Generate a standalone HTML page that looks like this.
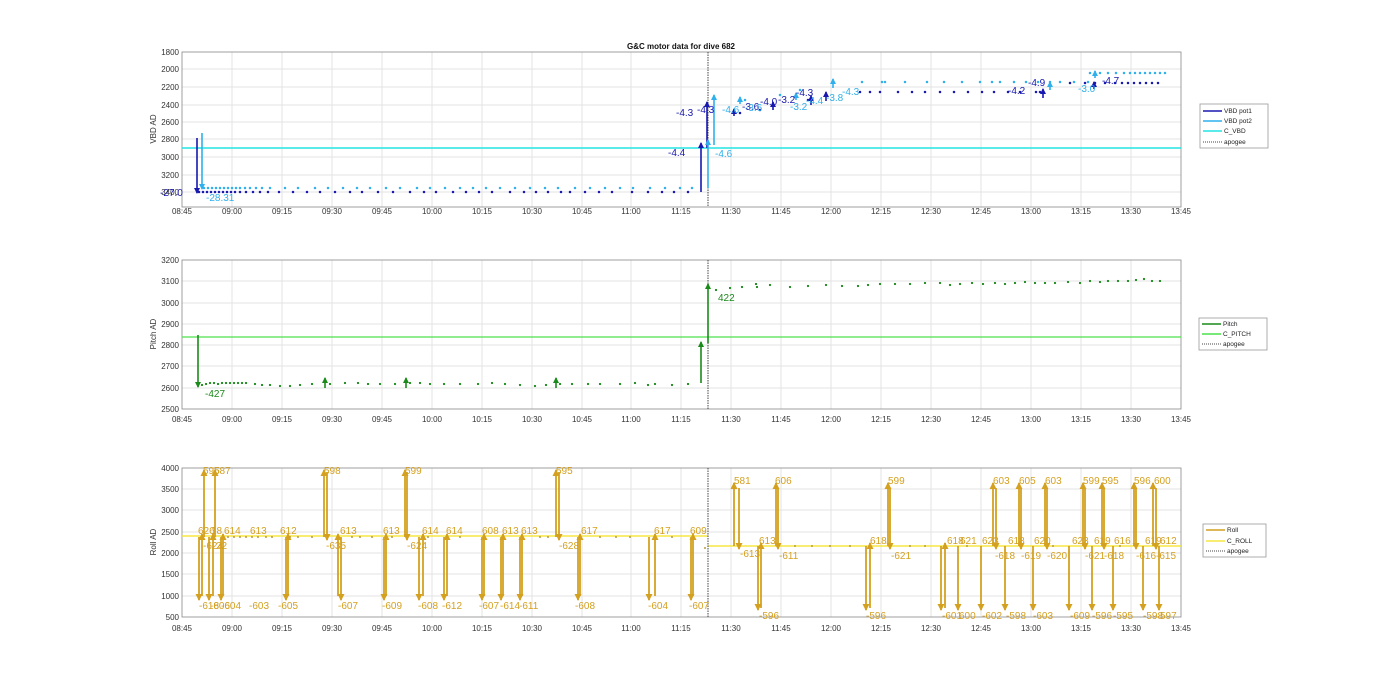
<!DOCTYPE html>
<html><head><meta charset="utf-8"><style>
html,body{margin:0;padding:0;background:#fff;}
svg{display:block;font-family:"Liberation Sans",Arial,sans-serif;}
.t{font-size:8px;fill:#333;}
.g{stroke:#e3e3e3;stroke-width:1;}
.ax{fill:none;stroke:#888;stroke-width:0.8;}
</style></head><body>
<svg width="1400" height="693" viewBox="0 0 1400 693" xmlns="http://www.w3.org/2000/svg">
<defs>
<marker id="ab" markerWidth="6" markerHeight="6" refX="5" refY="3" orient="auto" markerUnits="userSpaceOnUse" viewBox="0 0 6 6"><path d="M0,0 L6,3 L0,6Z" fill="#1818b0"/></marker>
<marker id="al" markerWidth="6" markerHeight="6" refX="5" refY="3" orient="auto" markerUnits="userSpaceOnUse" viewBox="0 0 6 6"><path d="M0,0 L6,3 L0,6Z" fill="#2fb0ec"/></marker>
<marker id="ag" markerWidth="6" markerHeight="6" refX="5" refY="3" orient="auto" markerUnits="userSpaceOnUse" viewBox="0 0 6 6"><path d="M0,0 L6,3 L0,6Z" fill="#1a8a1a"/></marker>
<marker id="ay" markerWidth="7" markerHeight="7" refX="6" refY="3.5" orient="auto" markerUnits="userSpaceOnUse" viewBox="0 0 7 7"><path d="M0,0 L7,3.5 L0,7Z" fill="#d4a020"/></marker>
</defs>

<text x="681" y="49" text-anchor="middle" style="font-size:8px;font-weight:bold;fill:#111">G&amp;C motor data for dive 682</text>

<!-- ============ TOP PLOT ============ -->
<g class="g">
<path d="M232,52V207M282,52V207M332,52V207M382,52V207M432,52V207M482,52V207M532,52V207M582,52V207M631,52V207M681,52V207M731,52V207M781,52V207M831,52V207M881,52V207M931,52V207M981,52V207M1031,52V207M1081,52V207M1131,52V207"/>
<path d="M182,69H1181M182,87H1181M182,105H1181M182,122H1181M182,139H1181M182,157H1181M182,175H1181M182,192H1181"/>
</g>
<rect class="ax" x="182" y="52" width="999" height="155"/>
<g class="t" text-anchor="end">
<text x="179" y="55">1800</text><text x="179" y="72">2000</text><text x="179" y="90">2200</text><text x="179" y="108">2400</text><text x="179" y="125">2600</text><text x="179" y="142">2800</text><text x="179" y="160">3000</text><text x="179" y="178">3200</text><text x="179" y="195">3400</text>
</g>
<text class="t" transform="translate(156,129) rotate(-90)" text-anchor="middle">VBD AD</text>
<g class="t" text-anchor="middle">
<text x="182" y="214">08:45</text><text x="232" y="214">09:00</text><text x="282" y="214">09:15</text><text x="332" y="214">09:30</text><text x="382" y="214">09:45</text><text x="432" y="214">10:00</text><text x="482" y="214">10:15</text><text x="532" y="214">10:30</text><text x="582" y="214">10:45</text><text x="631" y="214">11:00</text><text x="681" y="214">11:15</text><text x="731" y="214">11:30</text><text x="781" y="214">11:45</text><text x="831" y="214">12:00</text><text x="881" y="214">12:15</text><text x="931" y="214">12:30</text><text x="981" y="214">12:45</text><text x="1031" y="214">13:00</text><text x="1081" y="214">13:15</text><text x="1131" y="214">13:30</text><text x="1181" y="214">13:45</text>
</g>
<line x1="182" y1="148" x2="1181" y2="148" stroke="#22e4e4" stroke-width="1.5"/>
<line x1="708" y1="52" x2="708" y2="207" stroke="#444" stroke-dasharray="1.5,1" stroke-width="1"/>
<path stroke="#2fb0ec" stroke-width="2.5" stroke-linecap="round" d="M204,188h0M208,188h0M212,188h0M216,188h0M220,188h0M224,188h0M228,188h0M232,188h0M236,188h0M240,188h0M245,188h0M250,188h0M256,188h0M262,188h0M270,188h0M285,188h0M298,188h0M315,188h0M328,188h0M343,188h0M357,188h0M370,188h0M386,188h0M400,188h0M417,188h0M430,188h0M445,188h0M460,188h0M473,188h0M486,188h0M500,188h0M515,188h0M530,188h0M545,188h0M558,188h0M575,188h0M590,188h0M605,188h0M620,188h0M633,188h0M650,188h0M665,188h0M680,188h0M692,188h0M745,100h0M780,95h0M800,90h0M862,82h0M882,82h0M885,82h0M905,82h0M927,82h0M944,82h0M962,82h0M980,82h0M992,82h0M1000,82h0M1014,82h0M1026,82h0M1038,82h0M1050,82h0M1060,82h0M1074,82h0M1088,82h0M1090,73h0M1100,73h0M1108,73h0M1116,73h0M1124,73h0M1130,73h0M1135,73h0M1140,73h0M1145,73h0M1150,73h0M1155,73h0M1160,73h0M1165,73h0"/>
<path stroke="#1818b0" stroke-width="2.5" stroke-linecap="round" d="M199,192h0M203,192h0M207,192h0M211,192h0M215,192h0M219,192h0M223,192h0M227,192h0M231,192h0M235,192h0M240,192h0M246,192h0M253,192h0M260,192h0M268,192h0M279,192h0M293,192h0M307,192h0M320,192h0M335,192h0M350,192h0M362,192h0M378,192h0M393,192h0M410,192h0M424,192h0M436,192h0M453,192h0M466,192h0M479,192h0M492,192h0M510,192h0M524,192h0M536,192h0M548,192h0M561,192h0M570,192h0M585,192h0M599,192h0M612,192h0M632,192h0M648,192h0M662,192h0M674,192h0M688,192h0M740,113h0M760,110h0M808,100h0M860,92h0M870,92h0M880,92h0M898,92h0M912,92h0M925,92h0M940,92h0M954,92h0M968,92h0M982,92h0M994,92h0M1008,92h0M1020,92h0M1036,92h0M1040,92h0M1070,83h0M1085,83h0M1095,83h0M1105,83h0M1115,83h0M1122,83h0M1128,83h0M1134,83h0M1140,83h0M1146,83h0M1152,83h0M1158,83h0"/>
<g stroke-width="1.6">
<line x1="197" y1="138" x2="197" y2="193" stroke="#1818b0" marker-end="url(#ab)"/>
<line x1="202" y1="133" x2="202" y2="189" stroke="#2fb0ec" marker-end="url(#al)"/>
<line x1="701" y1="192" x2="701" y2="143" stroke="#1818b0" marker-end="url(#ab)"/>
<line x1="707" y1="148" x2="707" y2="102" stroke="#1818b0" marker-end="url(#ab)"/>
<line x1="708" y1="188" x2="708" y2="140" stroke="#2fb0ec" marker-end="url(#al)"/>
<line x1="714" y1="145" x2="714" y2="95" stroke="#2fb0ec" marker-end="url(#al)"/>
<line x1="734" y1="116" x2="734" y2="109" stroke="#1818b0" marker-end="url(#ab)"/>
<line x1="740" y1="104" x2="740" y2="97" stroke="#2fb0ec" marker-end="url(#al)"/>
<line x1="773" y1="110" x2="773" y2="102" stroke="#1818b0" marker-end="url(#ab)"/>
<line x1="796" y1="100" x2="796" y2="93" stroke="#2fb0ec" marker-end="url(#al)"/>
<line x1="811" y1="105" x2="811" y2="96" stroke="#1818b0" marker-end="url(#ab)"/>
<line x1="826" y1="101" x2="826" y2="92" stroke="#1818b0" marker-end="url(#ab)"/>
<line x1="833" y1="88" x2="833" y2="79" stroke="#2fb0ec" marker-end="url(#al)"/>
<line x1="1094" y1="89" x2="1094" y2="82" stroke="#1818b0" marker-end="url(#ab)"/>
<line x1="1095" y1="78" x2="1095" y2="71" stroke="#2fb0ec" marker-end="url(#al)"/>
<line x1="1043" y1="98" x2="1043" y2="89" stroke="#1818b0" marker-end="url(#ab)"/>
<line x1="1050" y1="90" x2="1050" y2="82" stroke="#2fb0ec" marker-end="url(#al)"/>
</g>
<g style="font-size:10px" fill="#1818b0">
<text x="676" y="116">-4.3</text><text x="697" y="113">-4.3</text><text x="668" y="156">-4.4</text><text x="742" y="110">-3.6</text><text x="760" y="105">-4.0</text><text x="778" y="103">-3.2</text><text x="796" y="96">-4.3</text><text x="1008" y="94">-4.2</text><text x="1028" y="86">-4.9</text><text x="1102" y="84">-4.7</text><text x="160" y="196">-27.0</text>
</g>
<g style="font-size:10px" fill="#2fb0ec">
<text x="715" y="157">-4.6</text><text x="722" y="113">-4.6</text><text x="745" y="111">-3.6</text><text x="790" y="110">-3.2</text><text x="806" y="104">-4.4</text><text x="826" y="101">-3.8</text><text x="842" y="95">-4.3</text><text x="1078" y="92">-3.0</text><text x="206" y="201">-28.31</text>
</g>
<rect x="1200" y="104" width="68" height="44" fill="#fff" stroke="#999" stroke-width="0.8"/>
<g style="font-size:6.5px" fill="#222">
<line x1="1203" y1="111" x2="1222" y2="111" stroke="#1818b0" stroke-width="1.5"/><text x="1224" y="113">VBD pot1</text>
<line x1="1203" y1="121" x2="1222" y2="121" stroke="#2fb0ec" stroke-width="1.5"/><text x="1224" y="123">VBD pot2</text>
<line x1="1203" y1="131" x2="1222" y2="131" stroke="#22e4e4" stroke-width="1.5"/><text x="1224" y="133">C_VBD</text>
<line x1="1203" y1="142" x2="1222" y2="142" stroke="#444" stroke-dasharray="1,1"/><text x="1224" y="144">apogee</text>
</g>

<!-- ============ MIDDLE PLOT ============ -->
<g class="g">
<path d="M232,260V409M282,260V409M332,260V409M382,260V409M432,260V409M482,260V409M532,260V409M582,260V409M631,260V409M681,260V409M731,260V409M781,260V409M831,260V409M881,260V409M931,260V409M981,260V409M1031,260V409M1081,260V409M1131,260V409"/>
<path d="M182,281H1181M182,303H1181M182,324H1181M182,345H1181M182,366H1181M182,388H1181"/>
</g>
<rect class="ax" x="182" y="260" width="999" height="149"/>
<g class="t" text-anchor="end">
<text x="179" y="263">3200</text><text x="179" y="284">3100</text><text x="179" y="306">3000</text><text x="179" y="327">2900</text><text x="179" y="348">2800</text><text x="179" y="369">2700</text><text x="179" y="391">2600</text><text x="179" y="412">2500</text>
</g>
<text class="t" transform="translate(156,334) rotate(-90)" text-anchor="middle">Pitch AD</text>
<g class="t" text-anchor="middle">
<text x="182" y="422">08:45</text><text x="232" y="422">09:00</text><text x="282" y="422">09:15</text><text x="332" y="422">09:30</text><text x="382" y="422">09:45</text><text x="432" y="422">10:00</text><text x="482" y="422">10:15</text><text x="532" y="422">10:30</text><text x="582" y="422">10:45</text><text x="631" y="422">11:00</text><text x="681" y="422">11:15</text><text x="731" y="422">11:30</text><text x="781" y="422">11:45</text><text x="831" y="422">12:00</text><text x="881" y="422">12:15</text><text x="931" y="422">12:30</text><text x="981" y="422">12:45</text><text x="1031" y="422">13:00</text><text x="1081" y="422">13:15</text><text x="1131" y="422">13:30</text><text x="1181" y="422">13:45</text>
</g>
<line x1="182" y1="337" x2="1181" y2="337" stroke="#4ce04c" stroke-width="1.2"/>
<line x1="708" y1="260" x2="708" y2="409" stroke="#444" stroke-dasharray="1.5,1" stroke-width="1"/>
<path stroke="#1a8a1a" stroke-width="2.3" stroke-linecap="round" d="M202,385h0M206,384h0M210,383h0M214,383h0M218,384h0M222,383h0M226,383h0M230,383h0M234,383h0M238,383h0M242,383h0M246,383h0M255,384h0M262,385h0M270,385h0M280,386h0M290,386h0M300,385h0M312,384h0M330,384h0M345,383h0M358,383h0M368,384h0M380,384h0M395,384h0M410,383h0M420,383h0M430,384h0M444,384h0M460,384h0M478,384h0M492,383h0M505,384h0M520,385h0M535,386h0M546,385h0M560,384h0M572,384h0M588,384h0M600,384h0M620,384h0M635,383h0M648,385h0M655,384h0M672,385h0M688,384h0M716,290h0M730,288h0M742,287h0M756,284h0M757,287h0M770,285h0M790,287h0M808,286h0M826,285h0M842,286h0M858,286h0M868,285h0M880,284h0M895,284h0M910,284h0M925,283h0M940,283h0M950,285h0M960,284h0M972,283h0M983,284h0M995,283h0M1005,284h0M1015,283h0M1025,282h0M1035,283h0M1045,283h0M1055,283h0M1068,282h0M1080,283h0M1090,281h0M1100,282h0M1108,281h0M1118,281h0M1128,281h0M1136,280h0M1144,279h0M1152,281h0M1160,281h0"/>
<g stroke="#1a8a1a" stroke-width="1.6">
<line x1="198" y1="335" x2="198" y2="387" marker-end="url(#ag)"/>
<line x1="701" y1="383" x2="701" y2="342" marker-end="url(#ag)"/>
<line x1="708" y1="343" x2="708" y2="284" marker-end="url(#ag)"/>
<line x1="325" y1="388" x2="325" y2="378" marker-end="url(#ag)"/>
<line x1="406" y1="388" x2="406" y2="378" marker-end="url(#ag)"/>
<line x1="556" y1="388" x2="556" y2="378" marker-end="url(#ag)"/>
</g>
<g style="font-size:10px" fill="#1a8a1a"><text x="205" y="397">-427</text><text x="718" y="301">422</text></g>
<rect x="1199" y="318" width="68" height="32" fill="#fff" stroke="#999" stroke-width="0.8"/>
<g style="font-size:6.5px" fill="#222">
<line x1="1202" y1="324" x2="1221" y2="324" stroke="#1a8a1a" stroke-width="1.5"/><text x="1223" y="326">Pitch</text>
<line x1="1202" y1="334" x2="1221" y2="334" stroke="#4ce04c" stroke-width="1.5"/><text x="1223" y="336">C_PITCH</text>
<line x1="1202" y1="344" x2="1221" y2="344" stroke="#444" stroke-dasharray="1,1"/><text x="1223" y="346">apogee</text>
</g>

<!-- ============ BOTTOM PLOT ============ -->
<g class="g">
<path d="M232,468V617M282,468V617M332,468V617M382,468V617M432,468V617M482,468V617M532,468V617M582,468V617M631,468V617M681,468V617M731,468V617M781,468V617M831,468V617M881,468V617M931,468V617M981,468V617M1031,468V617M1081,468V617M1131,468V617"/>
<path d="M182,489H1181M182,510H1181M182,532H1181M182,553H1181M182,574H1181M182,596H1181"/>
</g>
<rect class="ax" x="182" y="468" width="999" height="149"/>
<g class="t" text-anchor="end">
<text x="179" y="471">4000</text><text x="179" y="492">3500</text><text x="179" y="513">3000</text><text x="179" y="535">2500</text><text x="179" y="556">2000</text><text x="179" y="577">1500</text><text x="179" y="599">1000</text><text x="179" y="620">500</text>
</g>
<text class="t" transform="translate(156,542) rotate(-90)" text-anchor="middle">Roll AD</text>
<g class="t" text-anchor="middle">
<text x="182" y="631">08:45</text><text x="232" y="631">09:00</text><text x="282" y="631">09:15</text><text x="332" y="631">09:30</text><text x="382" y="631">09:45</text><text x="432" y="631">10:00</text><text x="482" y="631">10:15</text><text x="532" y="631">10:30</text><text x="582" y="631">10:45</text><text x="631" y="631">11:00</text><text x="681" y="631">11:15</text><text x="731" y="631">11:30</text><text x="781" y="631">11:45</text><text x="831" y="631">12:00</text><text x="881" y="631">12:15</text><text x="931" y="631">12:30</text><text x="981" y="631">12:45</text><text x="1031" y="631">13:00</text><text x="1081" y="631">13:15</text><text x="1131" y="631">13:30</text><text x="1181" y="631">13:45</text>
</g>
<line x1="182" y1="536" x2="708" y2="536" stroke="#f5e642" stroke-width="1.5"/>
<line x1="708" y1="546" x2="1181" y2="546" stroke="#f5e642" stroke-width="1.5"/>
<line x1="708" y1="468" x2="708" y2="617" stroke="#444" stroke-dasharray="1.5,1" stroke-width="1"/>
<path stroke="#b89a40" stroke-width="2" stroke-linecap="round" d="M228,537h0M234,537h0M240,537h0M246,537h0M252,537h0M258,537h0M266,537h0M272,537h0M290,537h0M298,537h0M312,537h0M352,537h0M360,537h0M372,537h0M392,537h0M428,537h0M460,537h0M540,537h0M548,537h0M600,537h0M616,537h0M630,537h0M672,537h0M705,548h0M795,546h0M812,546h0M830,546h0M850,546h0M910,546h0M925,546h0M967,546h0M1053,546h0M1120,546h0"/>
<g stroke="#d4a020" stroke-width="1.8" fill="none">
<line x1="199" y1="537" x2="199" y2="600" marker-end="url(#ay)"/>
<line x1="209" y1="537" x2="209" y2="600" marker-end="url(#ay)"/>
<line x1="221" y1="537" x2="221" y2="600" marker-end="url(#ay)"/>
<line x1="286" y1="537" x2="286" y2="600" marker-end="url(#ay)"/>
<line x1="341" y1="537" x2="341" y2="600" marker-end="url(#ay)"/>
<line x1="384" y1="537" x2="384" y2="600" marker-end="url(#ay)"/>
<line x1="419" y1="537" x2="419" y2="600" marker-end="url(#ay)"/>
<line x1="444" y1="537" x2="444" y2="600" marker-end="url(#ay)"/>
<line x1="482" y1="537" x2="482" y2="600" marker-end="url(#ay)"/>
<line x1="501" y1="537" x2="501" y2="600" marker-end="url(#ay)"/>
<line x1="520" y1="537" x2="520" y2="600" marker-end="url(#ay)"/>
<line x1="578" y1="537" x2="578" y2="600" marker-end="url(#ay)"/>
<line x1="649" y1="537" x2="649" y2="600" marker-end="url(#ay)"/>
<line x1="691" y1="537" x2="691" y2="600" marker-end="url(#ay)"/>
<line x1="202" y1="596" x2="202" y2="534" marker-end="url(#ay)"/>
<line x1="213" y1="596" x2="213" y2="534" marker-end="url(#ay)"/>
<line x1="223" y1="596" x2="223" y2="534" marker-end="url(#ay)"/>
<line x1="288" y1="596" x2="288" y2="534" marker-end="url(#ay)"/>
<line x1="338" y1="596" x2="338" y2="534" marker-end="url(#ay)"/>
<line x1="386" y1="596" x2="386" y2="534" marker-end="url(#ay)"/>
<line x1="423" y1="596" x2="423" y2="534" marker-end="url(#ay)"/>
<line x1="447" y1="596" x2="447" y2="534" marker-end="url(#ay)"/>
<line x1="484" y1="596" x2="484" y2="534" marker-end="url(#ay)"/>
<line x1="503" y1="596" x2="503" y2="534" marker-end="url(#ay)"/>
<line x1="522" y1="596" x2="522" y2="534" marker-end="url(#ay)"/>
<line x1="580" y1="596" x2="580" y2="534" marker-end="url(#ay)"/>
<line x1="655" y1="596" x2="655" y2="534" marker-end="url(#ay)"/>
<line x1="693" y1="596" x2="693" y2="534" marker-end="url(#ay)"/>
<line x1="204" y1="537" x2="204" y2="470" marker-end="url(#ay)"/>
<line x1="215" y1="537" x2="215" y2="470" marker-end="url(#ay)"/>
<line x1="324" y1="537" x2="324" y2="470" marker-end="url(#ay)"/>
<line x1="405" y1="537" x2="405" y2="470" marker-end="url(#ay)"/>
<line x1="556" y1="537" x2="556" y2="470" marker-end="url(#ay)"/>
<line x1="327" y1="472" x2="327" y2="540" marker-end="url(#ay)"/>
<line x1="407" y1="472" x2="407" y2="540" marker-end="url(#ay)"/>
<line x1="559" y1="472" x2="559" y2="540" marker-end="url(#ay)"/>
<line x1="734" y1="546" x2="734" y2="483" marker-end="url(#ay)"/>
<line x1="739" y1="488" x2="739" y2="549" marker-end="url(#ay)"/>
<line x1="776" y1="546" x2="776" y2="483" marker-end="url(#ay)"/>
<line x1="778" y1="488" x2="778" y2="549" marker-end="url(#ay)"/>
<line x1="888" y1="546" x2="888" y2="483" marker-end="url(#ay)"/>
<line x1="890" y1="488" x2="890" y2="549" marker-end="url(#ay)"/>
<line x1="758" y1="546" x2="758" y2="610" marker-end="url(#ay)"/>
<line x1="761" y1="608" x2="761" y2="543" marker-end="url(#ay)"/>
<line x1="866" y1="546" x2="866" y2="610" marker-end="url(#ay)"/>
<line x1="870" y1="608" x2="870" y2="543" marker-end="url(#ay)"/>
<line x1="941" y1="546" x2="941" y2="610" marker-end="url(#ay)"/>
<line x1="945" y1="608" x2="945" y2="543" marker-end="url(#ay)"/>
<line x1="958" y1="546" x2="958" y2="610" marker-end="url(#ay)"/>
<line x1="981" y1="546" x2="981" y2="610" marker-end="url(#ay)"/>
<line x1="1005" y1="546" x2="1005" y2="610" marker-end="url(#ay)"/>
<line x1="1033" y1="546" x2="1033" y2="610" marker-end="url(#ay)"/>
<line x1="1069" y1="546" x2="1069" y2="610" marker-end="url(#ay)"/>
<line x1="1092" y1="546" x2="1092" y2="610" marker-end="url(#ay)"/>
<line x1="1113" y1="546" x2="1113" y2="610" marker-end="url(#ay)"/>
<line x1="1143" y1="546" x2="1143" y2="610" marker-end="url(#ay)"/>
<line x1="1159" y1="546" x2="1159" y2="610" marker-end="url(#ay)"/>
<line x1="993" y1="546" x2="993" y2="483" marker-end="url(#ay)"/>
<line x1="1019" y1="546" x2="1019" y2="483" marker-end="url(#ay)"/>
<line x1="1045" y1="546" x2="1045" y2="483" marker-end="url(#ay)"/>
<line x1="1083" y1="546" x2="1083" y2="483" marker-end="url(#ay)"/>
<line x1="1102" y1="546" x2="1102" y2="483" marker-end="url(#ay)"/>
<line x1="1134" y1="546" x2="1134" y2="483" marker-end="url(#ay)"/>
<line x1="1153" y1="546" x2="1153" y2="483" marker-end="url(#ay)"/>
<line x1="996" y1="488" x2="996" y2="549" marker-end="url(#ay)"/>
<line x1="1021" y1="488" x2="1021" y2="549" marker-end="url(#ay)"/>
<line x1="1047" y1="488" x2="1047" y2="549" marker-end="url(#ay)"/>
<line x1="1085" y1="488" x2="1085" y2="549" marker-end="url(#ay)"/>
<line x1="1104" y1="488" x2="1104" y2="549" marker-end="url(#ay)"/>
<line x1="1136" y1="488" x2="1136" y2="549" marker-end="url(#ay)"/>
<line x1="1156" y1="488" x2="1156" y2="549" marker-end="url(#ay)"/>
</g>
<g style="font-size:10px" fill="#d4a020">
<text x="203" y="474">595</text><text x="214" y="474">587</text><text x="324" y="474">598</text><text x="405" y="474">599</text><text x="556" y="474">595</text>
<text x="198" y="534">626</text><text x="211" y="534">18</text><text x="224" y="534">614</text><text x="250" y="534">613</text><text x="280" y="534">612</text><text x="340" y="534">613</text><text x="383" y="534">613</text><text x="422" y="534">614</text><text x="446" y="534">614</text><text x="482" y="534">608</text><text x="502" y="534">613</text><text x="521" y="534">613</text><text x="581" y="534">617</text><text x="654" y="534">617</text><text x="690" y="534">609</text>
<text x="203" y="549">-624</text><text x="216" y="549">22</text><text x="326" y="549">-635</text><text x="407" y="549">-624</text><text x="559" y="549">-628</text>
<text x="199" y="609">-618</text><text x="210" y="609">-606</text><text x="221" y="609">-604</text><text x="249" y="609">-603</text><text x="278" y="609">-605</text><text x="338" y="609">-607</text><text x="382" y="609">-609</text><text x="418" y="609">-608</text><text x="442" y="609">-612</text><text x="479" y="609">-607</text><text x="500" y="609">-614</text><text x="519" y="609">-611</text><text x="575" y="609">-608</text><text x="648" y="609">-604</text><text x="689" y="609">-607</text>
<text x="734" y="484">581</text><text x="775" y="484">606</text><text x="888" y="484">599</text><text x="993" y="484">603</text><text x="1019" y="484">605</text><text x="1045" y="484">603</text><text x="1083" y="484">599</text><text x="1102" y="484">595</text><text x="1134" y="484">596</text><text x="1154" y="484">600</text>
<text x="759" y="544">613</text><text x="870" y="544">618</text><text x="947" y="544">618</text><text x="960" y="544">621</text><text x="982" y="544">623</text><text x="1008" y="544">618</text><text x="1034" y="544">620</text><text x="1072" y="544">623</text><text x="1094" y="544">619</text><text x="1114" y="544">616</text><text x="1145" y="544">619</text><text x="1160" y="544">612</text>
<text x="740" y="557">-613</text><text x="779" y="559">-611</text><text x="891" y="559">-621</text><text x="995" y="559">-618</text><text x="1021" y="559">-619</text><text x="1047" y="559">-620</text><text x="1085" y="559">-621</text><text x="1104" y="559">-618</text><text x="1136" y="559">-616</text><text x="1156" y="559">-615</text>
<text x="759" y="619">-596</text><text x="866" y="619">-596</text><text x="942" y="619">-601</text><text x="959" y="619">600</text><text x="982" y="619">-602</text><text x="1006" y="619">-598</text><text x="1033" y="619">-603</text><text x="1070" y="619">-609</text><text x="1092" y="619">-596</text><text x="1113" y="619">-595</text><text x="1143" y="619">-598</text><text x="1160" y="619">597</text>
</g>
<rect x="1203" y="524" width="63" height="33" fill="#fff" stroke="#999" stroke-width="0.8"/>
<g style="font-size:6.5px" fill="#222">
<line x1="1206" y1="530" x2="1225" y2="530" stroke="#d4a020" stroke-width="1.5"/><text x="1227" y="532">Roll</text>
<line x1="1206" y1="541" x2="1225" y2="541" stroke="#f5e642" stroke-width="1.5"/><text x="1227" y="543">C_ROLL</text>
<line x1="1206" y1="551" x2="1225" y2="551" stroke="#444" stroke-dasharray="1,1"/><text x="1227" y="553">apogee</text>
</g>
</svg>
</body></html>
